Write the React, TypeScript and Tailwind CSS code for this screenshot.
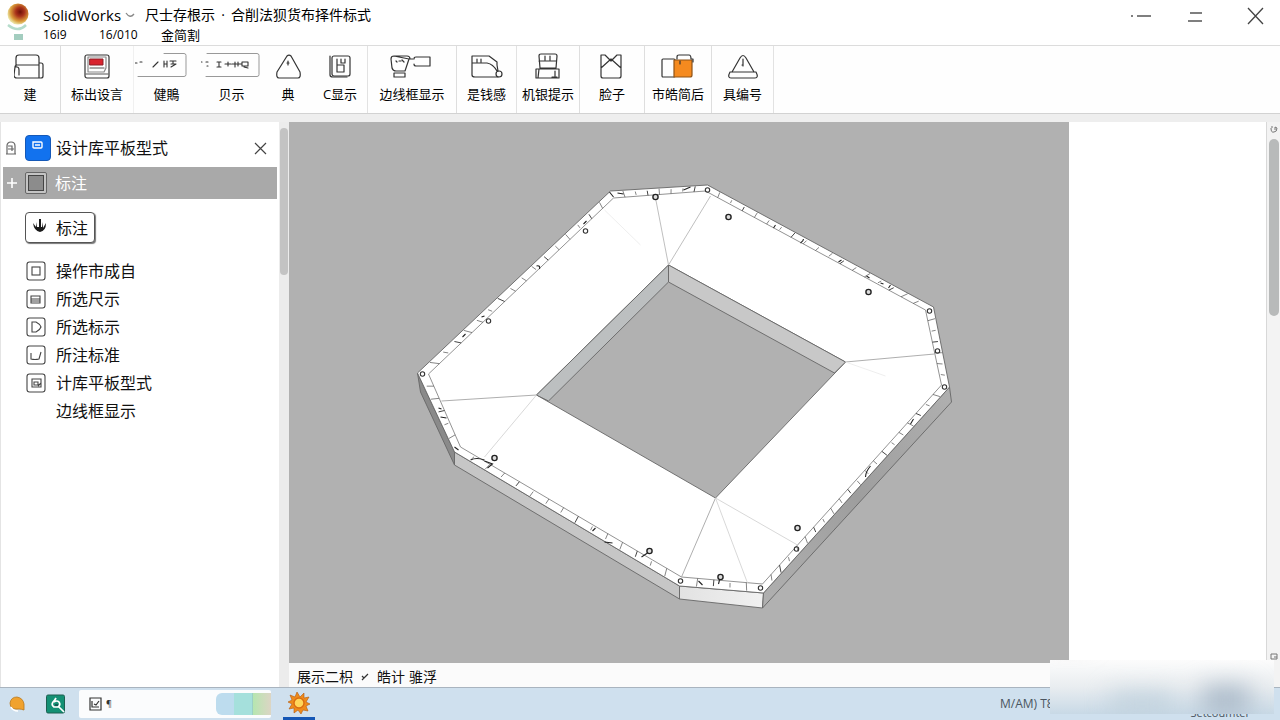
import React, { useState } from "react";
import clsx from "clsx";

interface ToolItem {
  label: string;
  width: string;
  divider: string;
  icon: React.ReactNode;
}

interface LibraryItem {
  label: string;
  icon?: React.ReactNode;
}

type Point = [number, number];

const iconProps = {
  fill: "none",
  stroke: "#333",
  strokeWidth: 1.2,
  strokeLinecap: "round" as const,
  strokeLinejoin: "round" as const,
};

const tools: ToolItem[] = [
  {
    label: "建",
    width: "w-[61px]",
    divider: "border-[#dcdcdc]",
    icon: (
      <svg width="32" height="28" viewBox="0 0 32 28" {...iconProps}>
        <path d="M2 14V5q0-3 3-3h17q3 0 3 3v5M25 12V10h2q2 0 2 2v11q0 2-2 2h-2M1 14q0-2 2-2h22v13H3q-3 0-3-3zM3 14q2 0 2 3v5" />
      </svg>
    ),
  },
  {
    label: "标出设言",
    width: "w-[73px]",
    divider: "border-[#f0f0f0]",
    icon: (
      <svg width="28" height="28" viewBox="0 0 28 28" {...iconProps}>
        <rect x="2" y="2" width="24" height="23" rx="2" />
        <path d="M5 19V4h18v11l-2 4z" stroke="#888" />
        <rect x="7" y="6" width="13" height="6" fill="#d9232e" stroke="#8c1f27" strokeWidth="1" />
        <path d="M7 15h14M3 21h22" stroke="#555" />
      </svg>
    ),
  },
  {
    label: "健鵙",
    width: "w-[66px]",
    divider: "border-transparent",
    icon: (
      <svg width="64" height="28" viewBox="0 0 64 28" {...iconProps}>
        <path d="M29 0.5h20q2 0 2 2v19q0 2-2 2H3" stroke="#999" strokeWidth="1" />
        <path d="M0 10h2M5 9h2M18 14l5-5M29 8v6M29 11h3M32 8v6M35 8h6M36 11h5M38 8v3M36 14l5-3" strokeWidth="1.1" />
      </svg>
    ),
  },
  {
    label: "贝示",
    width: "w-[64px]",
    divider: "border-transparent",
    icon: (
      <svg width="62" height="28" viewBox="0 0 62 28" {...iconProps}>
        <path d="M6 0.5h50q2 0 2 2v19q0 2-2 2H5" stroke="#999" strokeWidth="1" />
        <path d="M0 9h1M5 9h2M6 13h1M16 9h4M18 9v5M16 14h4M24 11h6M27 9v4M31 11h5M34 9v5M37 9v4M37 11h4M41 9h6v4h-6zM43 14l4 1" strokeWidth="1.1" />
      </svg>
    ),
  },
  {
    label: "典",
    width: "w-[49px]",
    divider: "border-transparent",
    icon: (
      <svg width="26" height="28" viewBox="0 0 26 28" {...iconProps}>
        <path d="M12 3q2-2 4 0l9 16q1 6-2 6H4q-3 0-2-6zM13 8v4M12 10h2" />
      </svg>
    ),
  },
  {
    label: "C显示",
    width: "w-[55px]",
    divider: "border-[#e2e2e2]",
    icon: (
      <svg width="24" height="28" viewBox="0 0 24 28" {...iconProps}>
        <path d="M2 3v19q0 2 3 2h14" />
        <rect x="4" y="3" width="18" height="20" rx="2" />
        <path d="M9 6v13M9 12h7M9 19h7v-7M13 6v4h4V6" />
      </svg>
    ),
  },
  {
    label: "边线框显示",
    width: "w-[89px]",
    divider: "border-[#dedede]",
    icon: (
      <svg width="44" height="28" viewBox="0 0 44 28" {...iconProps}>
        <path d="M4 3h13q3 0 3 3h3M19 6l-4 12H6q-3 0-4-3L1 6q0-3 3-3zM4 20h11v4H4zM6 8l1 1M9 8h2M14 9l-2-2" />
        <path d="M26 4h14v9H26M24 6q0-2 2-2M24 11q0 2 2 2" />
      </svg>
    ),
  },
  {
    label: "是钱感",
    width: "w-[60px]",
    divider: "border-[#e2e2e2]",
    icon: (
      <svg width="34" height="28" viewBox="0 0 34 28" {...iconProps}>
        <path d="M2 3h17l8 6v3l1 6M2 3v19q0 2 3 2h23M2 10h15q6 1 10 8M7 6v3M11 6v3" />
        <circle cx="29" cy="21" r="3" />
      </svg>
    ),
  },
  {
    label: "机银提示",
    width: "w-[63px]",
    divider: "border-[#dedede]",
    icon: (
      <svg width="28" height="28" viewBox="0 0 28 28" {...iconProps}>
        <path d="M5 3q0-2 2-2h14q2 0 2 2l-1 12H6zM5 8h17M11 3v4M16 3v4M2 16h23v9H2zM5 16l-1 9M21 18v5M18 24h5" />
      </svg>
    ),
  },
  {
    label: "脸子",
    width: "w-[65px]",
    divider: "border-[#dedede]",
    icon: (
      <svg width="26" height="28" viewBox="0 0 26 28" {...iconProps}>
        <path d="M2 2v21q0 2 2 2h16q2 0 2-2V2h-4l-6 6-6-6zM2 15L12 6l10 9" />
      </svg>
    ),
  },
  {
    label: "市皓简后",
    width: "w-[67px]",
    divider: "border-[#dedede]",
    icon: (
      <svg width="34" height="28" viewBox="0 0 34 28" {...iconProps}>
        <rect x="1" y="6" width="13" height="18" rx="1" />
        <path d="M13 7h18v15q0 2-2 2H13z" fill="#f58a1f" stroke="#8f5215" />
        <path d="M16 6V4q0-2 2-2h10q2 0 2 4h2v3M19 8v3" />
      </svg>
    ),
  },
  {
    label: "具编号",
    width: "w-[62px]",
    divider: "border-[#e2e2e2]",
    icon: (
      <svg width="32" height="28" viewBox="0 0 32 28" {...iconProps}>
        <path d="M5 19L13 5q3-5 6 0l8 14M3 19h26q3 6-1 6H4q-4 0-1-6zM16 6v7M15 12h1" />
      </svg>
    ),
  },
];

const libraryItems: LibraryItem[] = [
  { label: "操作市成自", icon: <rect x="6" y="6" width="8" height="8" /> },
  { label: "所选尺示", icon: <path d="M5 7h9v7H5zM5 10h9M5 12h9" /> },
  { label: "所选标示", icon: <path d="M6 5h4q4 2 5 5-1 3-5 5H6z" /> },
  { label: "所注标准", icon: <path d="M5 8v6q4 1 8 0l2-7" /> },
  { label: "计库平板型式", icon: <path d="M6 6h9v8H6zM8 9h4v3H8zM12 13l3-3" /> },
  { label: "边线框显示" },
];

const outer: Point[] = [[417, 373], [610, 191], [707, 185], [933, 307], [949, 387], [763, 593], [679, 586], [454, 452]];
const inner: Point[] = [[428, 374], [613, 198], [705, 191], [925, 310], [941, 385], [762, 584], [681, 577], [460, 447]];
const tickCounts = [16, 7, 17, 6, 20, 4, 14, 5];

const folds = [
  { d: "M668 265L655 198M668 265L710 196", stroke: "#b8b8b8" },
  { d: "M536 395L441 401M845 362L934 354M715 498L681 577", stroke: "#a5a5a5" },
  { d: "M536 395L484 457M715 498L747 583M715 498L797 545", stroke: "#d4d4d4" },
  { d: "M604 210L640 245M845 362L885 376", stroke: "#ececec" },
];

const holes: Point[] = [[655, 197], [728, 217], [868, 292], [494, 458], [649, 551], [720, 577], [797, 528]];
const smallHoles: Point[] = [[585, 231], [488, 321], [422, 374], [707, 190], [929, 311], [944, 387], [760, 588], [680, 581], [796, 549], [937, 351]];

const toPoints = (points: Point[]) => points.map((p) => p.join(",")).join(" ");

const lerp = (a: Point, b: Point, t: number): Point => [a[0] + (b[0] - a[0]) * t, a[1] + (b[1] - a[1]) * t];

const RulerTicks: React.FC = () => (
  <g stroke="#444" strokeWidth="1">
    {outer.flatMap((start, side) => {
      const next = (side + 1) % outer.length;
      return Array.from({ length: tickCounts[side] }, (_, i) => {
        const t = (i + 1) / (tickCounts[side] + 1);
        const a = lerp(start, outer[next], t);
        const b = lerp(inner[side], inner[next], t);
        const from = lerp(a, b, i % 3 === 0 ? 0.1 : 0.3);
        const to = lerp(a, b, i % 4 === 1 ? 0.8 : 1);
        return (
          <line
            key={`${side}-${i}`}
            x1={from[0]}
            y1={from[1]}
            x2={to[0]}
            y2={to[1]}
            strokeOpacity={i % 4 === 2 ? 1 : 0.65}
          />
        );
      });
    })}
  </g>
);

const PlateModel: React.FC = () => (
  <svg viewBox="289 122 779 541" className="h-full w-full" role="img" aria-label="平板模型">
    <defs>
      <linearGradient id="sideRight" x1="0" y1="1" x2="1" y2="0">
        <stop offset="0" stopColor="#b0b0b0" />
        <stop offset="0.5" stopColor="#9e9e9e" />
        <stop offset="1" stopColor="#b0b0b0" />
      </linearGradient>
      <linearGradient id="sideFront" x1="0" y1="0" x2="1" y2="0">
        <stop offset="0" stopColor="#e2e2e2" />
        <stop offset="1" stopColor="#f1f1f1" />
      </linearGradient>
    </defs>
    <g stroke="#666" strokeWidth="0.9" strokeLinejoin="round">
      <polygon points="417,373 454,452 454,465 420,392" fill="#8a8a8a" />
      <polygon points="454,452 679,586 679,599 454,465" fill="#c6c6c6" />
      <polygon points="679,586 763,593 762,608 679,599" fill="url(#sideFront)" />
      <polygon points="763,593 949,387 951,402 762,608" fill="url(#sideRight)" />
      <path
        d={`M${toPoints(outer)}ZM668 265L536 395L715 498L845 362Z`}
        fill="#fff"
        fillRule="evenodd"
      />
      <polygon points={toPoints(inner)} fill="none" strokeWidth="0.8" stroke="#777" />
      <polygon points="668,265 668,282 548,401 536,395" fill="#bcbfc0" />
      <polygon points="668,265 845,362 834,373 668,282" fill="#c8c8c8" />
    </g>
    <g fill="none" strokeWidth="0.9">
      {folds.map((fold) => (
        <path key={fold.d} d={fold.d} stroke={fold.stroke} />
      ))}
    </g>
    <RulerTicks />
    <g fill="none" stroke="#222" strokeWidth="1.1">
      <path d="M470 460q6-3 14 0M484 461l8 3-5 4M604 542l8 1M641 557l6-4M592 531l3-3M865 477q0-5 5-11M910 424l3-5" />
      <path d="M683 190l7-3M617 193l6 1M438 408l3 1M440 417l6 1M609 192l4 5M454 447l4 3M719 580l-1 4M698 581l4 4" />
      <path d="M536 266q4-1 3 3M583 224l3-3M462 337l3-3M481 317l3-1M773 228l2-3M800 243q3-2 3-4M838 262l3-2M866 276l3 2M880 283l3 1M888 288l2-3" />
    </g>
    <g fill="#ddd" stroke="#222" strokeWidth="1.4">
      {holes.map(([x, y]) => (
        <circle key={`${x}-${y}`} cx={x} cy={y} r="2.6" />
      ))}
    </g>
    <g fill="none" stroke="#333" strokeWidth="1.1">
      {smallHoles.map(([x, y]) => (
        <circle key={`${x}-${y}`} cx={x} cy={y} r="2.2" />
      ))}
    </g>
  </svg>
);

const TitleBar: React.FC = () => (
  <header className="flex h-[46px] shrink-0 border-b border-[#dcdcdc] bg-white">
    <svg width="36" height="44" viewBox="0 0 36 44" className="shrink-0">
      <defs>
        <radialGradient id="logoBall" cx="0.6" cy="0.4" r="0.6">
          <stop offset="0" stopColor="#6e1008" />
          <stop offset="0.35" stopColor="#a8321a" />
          <stop offset="0.75" stopColor="#d99a3a" />
          <stop offset="1" stopColor="#eadf9c" />
        </radialGradient>
      </defs>
      <circle cx="18" cy="14" r="10.5" fill="url(#logoBall)" />
      <path d="M8 25q10 8 18 0" fill="none" stroke="#b5dccb" strokeWidth="2.5" />
      <path d="M14 34h9v6h-9z" fill="#a3cdbf" />
    </svg>
    <div className="ml-[7px] flex flex-col pt-[5px] text-black">
      <div className="flex h-5 items-center">
        <h1 className="font-['Open_Sans','Noto_Sans',sans-serif] text-[15px] leading-5">SolidWorks</h1>
        <svg width="10" height="6" viewBox="0 0 10 6" className="ml-1" fill="none" stroke="#888" strokeWidth="1.3">
          <path d="M1 1q4 6 8 1" />
        </svg>
        <span className="ml-2.5 text-[14px] leading-5">尺士存根示</span>
        <span className="w-4 text-center text-[14px] leading-5">·</span>
        <span className="text-[14px] leading-5">合削法狈货布择件标式</span>
      </div>
      <nav className="flex h-5 items-center text-[12px] leading-5">
        <button type="button" className="w-14 text-left">16i9</button>
        <button type="button" className="w-[62px] text-left">16/010</button>
        <button type="button" className="text-left text-[13px]">金简割</button>
      </nav>
    </div>
    <div className="ml-auto flex h-8 items-center gap-9 pr-4">
      <button type="button" aria-label="最小化">
        <svg width="20" height="18" viewBox="0 0 20 18" stroke="#555" strokeWidth="1.4">
          <path d="M0 9h2M6 9h14" />
        </svg>
      </button>
      <button type="button" aria-label="还原">
        <svg width="16" height="18" viewBox="0 0 16 18" stroke="#555" strokeWidth="1.4">
          <path d="M3 6h12M1 14h14" />
        </svg>
      </button>
      <button type="button" aria-label="关闭" className="ml-2">
        <svg width="17" height="18" viewBox="0 0 17 18" stroke="#444" strokeWidth="1.3">
          <path d="M1 1l15 16M16 1L1 17" />
        </svg>
      </button>
    </div>
  </header>
);

const Toolbar: React.FC = () => (
  <div className="flex h-[68px] shrink-0 border-b border-[#d2d2d2] bg-[#fefefe]">
    {tools.map((tool) => (
      <button
        key={tool.label}
        type="button"
        className={clsx("flex shrink-0 flex-col items-center border-r pt-[7px] text-black", tool.width, tool.divider)}
      >
        {tool.icon}
        <span className="mt-1 text-[13px] leading-[18px] whitespace-nowrap">{tool.label}</span>
      </button>
    ))}
  </div>
);

const LibraryPanel: React.FC = () => {
  const [selected, setSelected] = useState("标注");

  return (
    <aside className="flex w-[289px] shrink-0 bg-[#ececec]">
      <div className="flex w-[279px] flex-col border-l border-[#e4e4e4] bg-white pt-2">
        <div className="flex h-9 items-center">
          <svg width="20" height="16" viewBox="0 0 20 16" fill="none" stroke="#666" strokeWidth="1.2">
            <path d="M6 14V6q0-4 4-4t4 4v8M5 14h10M7 9h6M7 6h4v5" />
          </svg>
          <span className="ml-1 flex size-[26px] items-center justify-center rounded border border-[#1559b8] bg-[#1272ee]">
            <svg width="14" height="16" viewBox="0 0 14 16" fill="none" stroke="#fff" strokeWidth="1.4">
              <path d="M2 2h8q1 0 1 1v4q0 1-1 1H3q-1 0-1-1zM4 5h5" />
            </svg>
          </span>
          <h2 className="ml-[5px] text-[16px] leading-6 text-[#111]">设计库平板型式</h2>
          <button type="button" aria-label="关闭面板" className="mr-3 ml-auto">
            <svg width="13" height="13" viewBox="0 0 13 13" stroke="#444" strokeWidth="1.2">
              <path d="M1 1l11 11M12 1L1 12" />
            </svg>
          </button>
        </div>
        <button
          type="button"
          onClick={() => setSelected("标注")}
          className="mx-0.5 mt-px flex h-8 items-center bg-[#a9a9a9] text-white"
        >
          <svg width="10" height="10" viewBox="0 0 10 10" className="ml-1" stroke="#fff" strokeWidth="1.6">
            <path d="M0 5h10M5 0v10" />
          </svg>
          <span className="ml-2 flex size-[22px] items-center justify-center rounded-xs border border-[#666] bg-[#c4c4c4]">
            <span className="size-4 border border-[#444] bg-[#8c8c8c]" />
          </span>
          <span className="ml-2 text-[16px] leading-6">标注</span>
        </button>
        <button
          type="button"
          onClick={() => setSelected("标注")}
          className="mt-[13px] ml-6 flex h-[31px] w-[70px] items-center rounded border border-[#555] bg-white pl-1.5 text-[#111] shadow-[1px_1px_1px_#777]"
        >
          <svg width="16" height="20" viewBox="0 0 16 20" className="shrink-0">
            <path d="M1 5q1 8 7 9 6-1 6-9l-3 5V4l-1 5H9V1H7v8H5L4 4v5z" fill="#1a1a1a" />
          </svg>
          <span className="ml-2 text-[16px] leading-6">标注</span>
        </button>
        <ul className="mt-[14px] text-[16px] leading-7 text-[#111]">
          {libraryItems.map((item) => (
            <li key={item.label}>
              <button
                type="button"
                aria-pressed={selected === item.label}
                onClick={() => setSelected(item.label)}
                className="flex h-7 w-full items-center pl-[25px]"
              >
                <svg width="20" height="20" viewBox="0 0 20 20" fill="none" stroke="#444" strokeWidth="1.1">
                  {item.icon && <rect x="1" y="1" width="18" height="18" rx="2.5" />}
                  {item.icon}
                </svg>
                <span className="ml-2.5">{item.label}</span>
              </button>
            </li>
          ))}
        </ul>
      </div>
      <div className="flex w-[10px] justify-center pt-1.5">
        <div className="h-[147px] w-2 rounded-full bg-[#c3c3c3]" />
      </div>
    </aside>
  );
};

const Workspace: React.FC = () => (
  <main className="flex min-w-0 flex-1 flex-col">
    <div className="flex min-h-0 flex-1">
      <div className="min-w-0 flex-1 bg-[#b1b1b1]">
        <PlateModel />
      </div>
      <div className="w-[197px] shrink-0 bg-white" />
    </div>
    <div className="flex h-6 shrink-0 items-center bg-[#fbfbfb] pt-1 pl-2 text-[14px] leading-5 text-[#111]">
      <span>展示二枳</span>
      <svg width="8" height="10" viewBox="0 0 8 10" className="mx-2" fill="none" stroke="#333" strokeWidth="1.2">
        <path d="M1 8l6-6M1 4l2 2" />
      </svg>
      <span>皓计</span>
      <span className="ml-1">骓浮</span>
    </div>
  </main>
);

const VerticalScrollbar: React.FC = () => (
  <div className="flex w-[14px] shrink-0 flex-col items-center border-l border-[#d8d8d8] bg-[#f3f3f3]">
    <svg width="8" height="12" viewBox="0 0 8 12" className="mt-0.5" fill="none" stroke="#777">
      <path d="M1 4q0 5 3 4 3 0 3-4L5 3v3M1 3h2" />
    </svg>
    <div className="mt-[3px] h-[177px] w-2.5 rounded-full bg-[#b8baba]" />
    <svg width="8" height="8" viewBox="0 0 8 8" className="mt-auto mb-[26px]" fill="none" stroke="#777">
      <path d="M1 1h6v5H1zM4 4h3" />
    </svg>
  </div>
);

const Taskbar: React.FC = () => (
  <footer className="flex h-[33px] shrink-0 items-center border-t border-[#a9b4bf] bg-[#cfe0ee]">
    <button type="button" aria-label="消息" className="ml-2">
      <svg width="18" height="18" viewBox="0 0 18 18">
        <path d="M2 8q1-6 7-6 6 1 7 7v6q-3-1-5-1Q2 15 2 8z" fill="#f0a22e" stroke="#b9771a" strokeWidth="0.8" />
        <path d="M3 12q2 4 7 4" fill="none" stroke="#fff" strokeWidth="1.5" />
      </svg>
    </button>
    <button type="button" aria-label="查找" className="ml-5">
      <svg width="20" height="20" viewBox="0 0 20 20">
        <rect x="0.5" y="1" width="18" height="18" rx="1.5" fill="#139074" stroke="#1c5f50" />
        <path d="M10 4q-1 2-3 4-2 3 1 5h4q3-2 1-5-2-2-5 0M13 13l5 5" fill="none" stroke="#fff" strokeWidth="1.7" />
        <path d="M9 11h3" stroke="#123" strokeWidth="1" />
      </svg>
    </button>
    <div className="ml-[13px] flex h-7 w-[192px] items-center rounded-xs bg-[#fbfcfd] pl-2.5">
      <svg width="13" height="14" viewBox="0 0 13 14" fill="none" stroke="#333" strokeWidth="1.2">
        <path d="M1 1h11v12H1zM3 4v6h7M5 7l2 1 3-4" />
      </svg>
      <input
        type="text"
        aria-label="搜索"
        defaultValue="¶"
        className="ml-1 min-w-0 flex-1 bg-transparent text-[9px] text-[#333] outline-none"
      />
      <div className="flex h-[22px] w-[55px] overflow-hidden rounded-l-md">
        <span className="flex-1 bg-[#bddcee]" />
        <span className="flex-1 border-r border-[#9ccfc5] bg-[#a5e0dc]" />
        <span className="flex-1 bg-linear-to-r from-[#b5e6b0] to-[#dcd5c4]" />
      </div>
    </div>
    <button
      type="button"
      aria-label="设置"
      className="ml-3 flex h-8 w-8 items-center justify-center border-b-3 border-[#1557b5]"
    >
      <svg width="24" height="24" viewBox="0 0 24 24">
        <path
          d="M10 1l3 5 4-4v5l5-1-3 5 4 2-4 2 2 5-5-1-2 4-3-4-4 3v-5l-5 1 3-5-4-2 4-2-2-5 5 2z"
          fill="#ee8b1b"
          stroke="#b4590e"
          strokeWidth="0.6"
        />
        <circle cx="12" cy="12" r="5" fill="#ffd65a" stroke="#d96b12" strokeWidth="1.4" />
      </svg>
    </button>
    <div className="ml-auto flex h-full w-[280px] items-center text-[12px] text-[#4a5560]">
      <span className="whitespace-nowrap">M/AM) T8</span>
      <span className="mr-[30px] ml-auto self-end text-[11px] leading-[14px]">Setcoumter</span>
    </div>
  </footer>
);

const App: React.FC = () => {
  return (
    <div className="relative flex h-screen flex-col overflow-hidden bg-white font-['Open_Sans','Noto_Sans_CJK_SC',sans-serif]">
      <TitleBar />
      <Toolbar />
      <div className="h-2 shrink-0 bg-[#eeeeee]" />
      <div className="flex min-h-0 flex-1">
        <LibraryPanel />
        <Workspace />
        <VerticalScrollbar />
      </div>
      <Taskbar />
      {/* Frosted notice fading over the tray */}
      <div className="pointer-events-none absolute right-1.5 bottom-1.5 h-[54px] w-[224px] overflow-hidden bg-linear-to-b from-[#fcfcfc] via-[#e9edf0] to-[#c8d9e6]">
        <div className="flex h-full items-end gap-5 blur-md">
          <span className="-mt-8 h-3 w-10 self-start bg-[#b4b4b4]" />
          <span className="h-5 w-16 bg-[#bfd0dc]" />
          <span className="mr-6 ml-auto h-7 w-12 bg-[#aab9c8]" />
        </div>
      </div>
    </div>
  );
};

export default App;
